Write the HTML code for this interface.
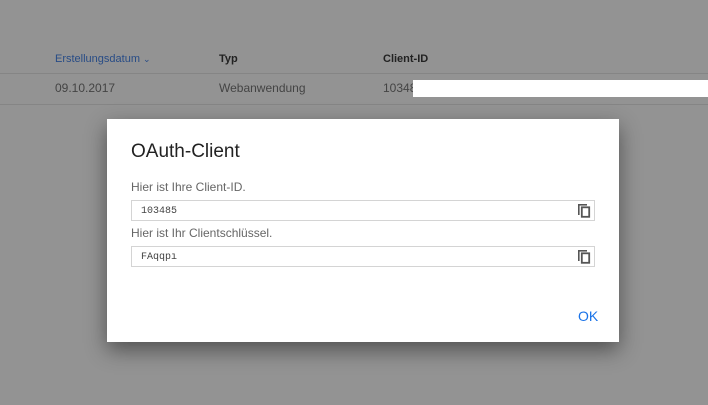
<!DOCTYPE html>
<html><head><style>
body{margin:0;width:708px;height:405px;background:#939393;font-family:"Liberation Sans",sans-serif;position:relative;overflow:hidden}
.a{position:absolute;white-space:nowrap}
.line{position:absolute;left:0;width:708px;height:1px;background:#858585}
.dlg{position:absolute;left:107px;top:119px;width:512px;height:223px;background:#fff;box-shadow:0 8px 20px rgba(0,0,0,.45)}
.inp{position:absolute;left:24px;width:462px;height:19px;border:1px solid #d4d4d4;font-family:"Liberation Mono",monospace;font-size:10px;color:#444;line-height:21px;text-indent:9px}
.ic{position:absolute;right:3px;top:2px;width:14px;height:15px}
.lbl{position:absolute;left:24px;font-size:12px;color:#666}
</style></head><body>
<div class="a" style="left:55px;top:53px;font-size:11px;color:#284c86">Erstellungsdatum <span style="font-size:9px">&#8964;</span></div>
<div class="a" style="left:219px;top:53px;font-size:11px;font-weight:bold;color:#222">Typ</div>
<div class="a" style="left:383px;top:53px;font-size:11px;font-weight:bold;color:#222">Client-ID</div>
<div class="line" style="top:73px"></div>
<div class="a" style="left:55px;top:81px;font-size:12px;color:#444">09.10.2017</div>
<div class="a" style="left:219px;top:81px;font-size:12px;color:#444">Webanwendung</div>
<div class="a" style="left:383px;top:81px;font-size:12px;color:#444">10348</div>
<div class="a" style="left:413px;top:80px;width:295px;height:17px;background:#fff"></div>
<div class="line" style="top:104px"></div>
<div class="dlg">
<div class="a" style="left:24px;top:22px;font-size:19px;color:#222">OAuth-Client</div>
<div class="lbl" style="top:61px">Hier ist Ihre Client-ID.</div>
<div class="inp" style="top:81px">103485
<svg class="ic" viewBox="0 0 14 15"><rect x="1" y="1" width="1.6" height="11" fill="#555"/><rect x="1" y="1" width="9" height="1.6" fill="#555"/><rect x="4.8" y="4.3" width="7.4" height="9.5" fill="none" stroke="#555" stroke-width="1.8"/></svg></div>
<div class="lbl" style="top:107px">Hier ist Ihr Clientschlüssel.</div>
<div class="inp" style="top:127px">FAqqpı
<svg class="ic" viewBox="0 0 14 15"><rect x="1" y="1" width="1.6" height="11" fill="#555"/><rect x="1" y="1" width="9" height="1.6" fill="#555"/><rect x="4.8" y="4.3" width="7.4" height="9.5" fill="none" stroke="#555" stroke-width="1.8"/></svg></div>
<div class="a" style="left:471px;top:189px;font-size:14px;color:#1a73e8">OK</div>
</div>
</body></html>
